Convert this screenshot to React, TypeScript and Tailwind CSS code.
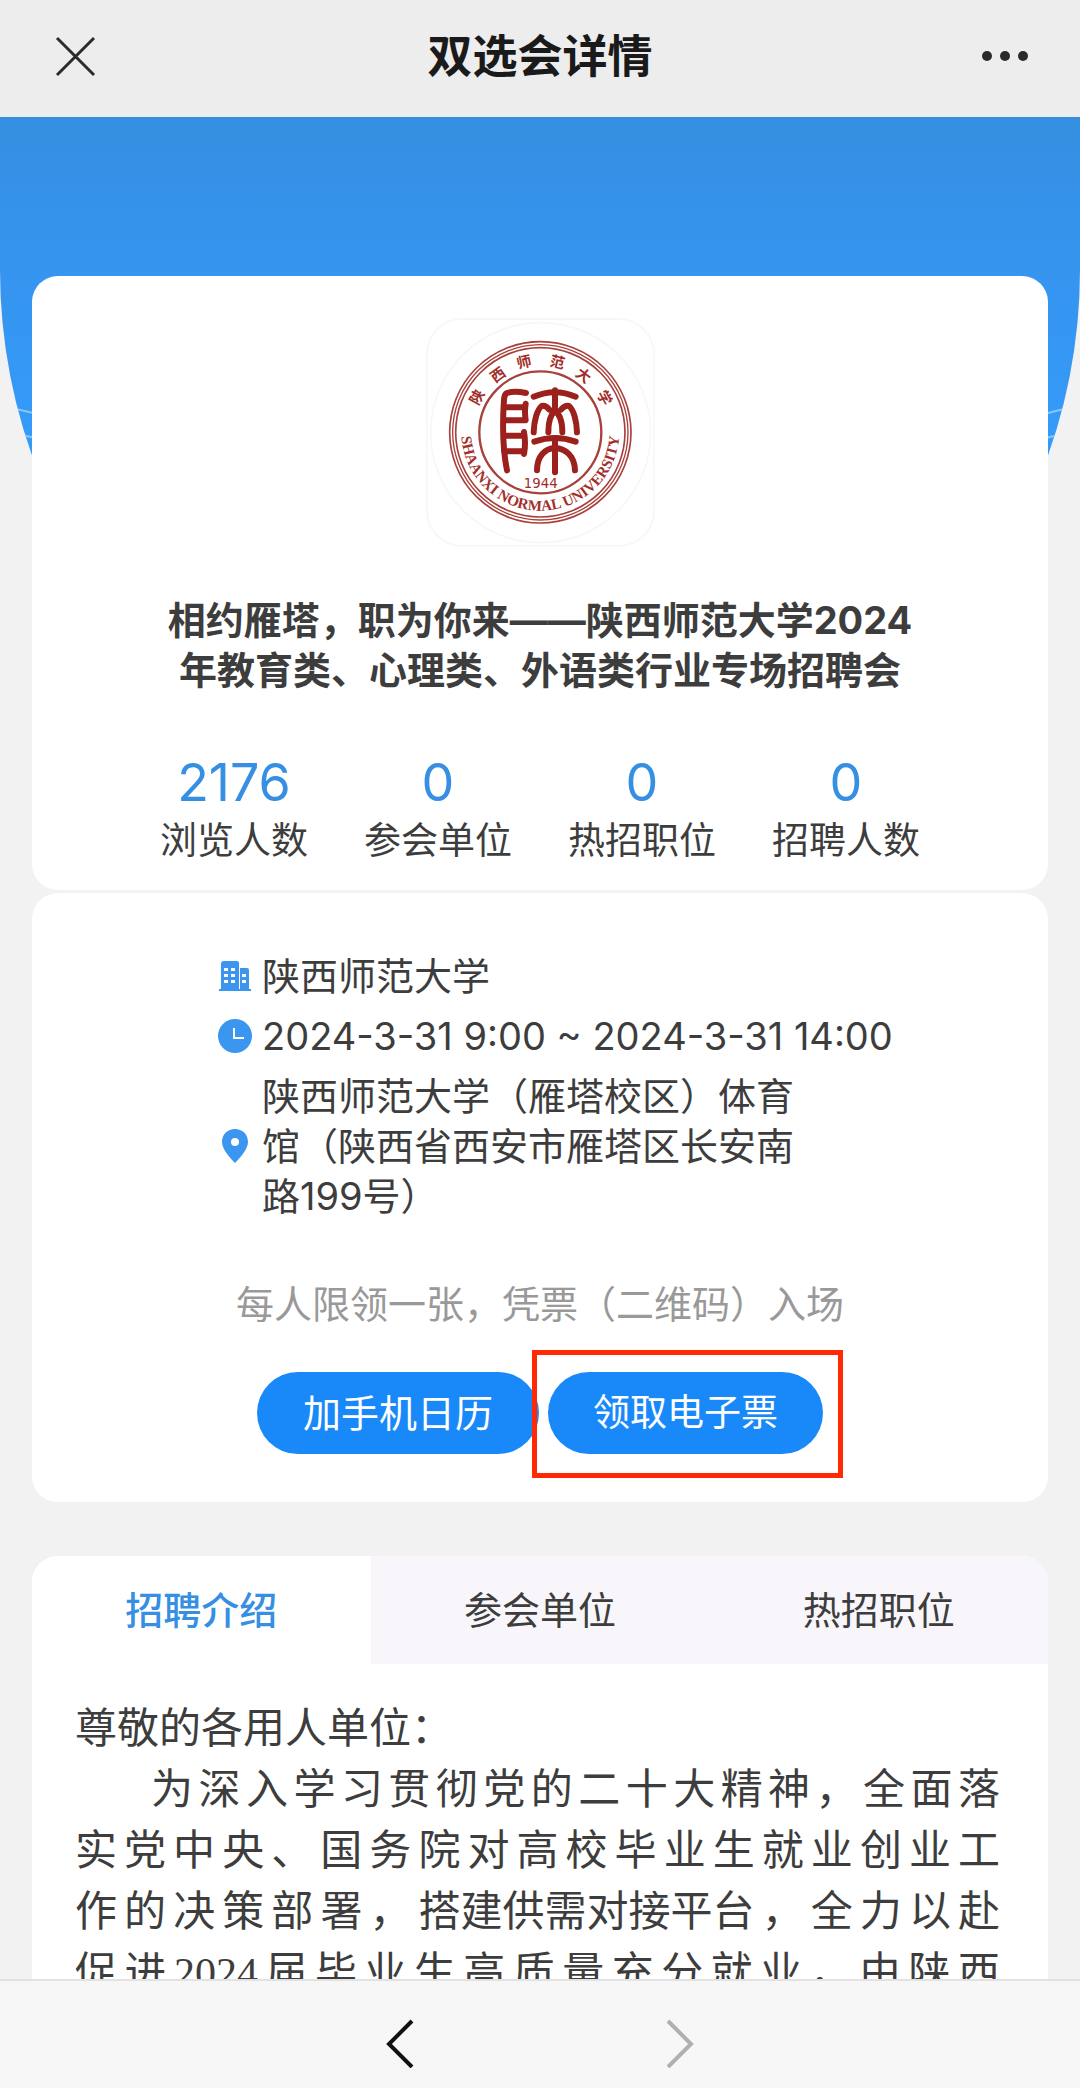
import React, { useState } from 'react';

const stats = [
  { label: '浏览人数', value: 2176 },
  { label: '参会单位', value: 0 },
  { label: '热招职位', value: 0 },
  { label: '招聘人数', value: 0 },
];

const tabs = ['招聘介绍', '参会单位', '热招职位'];

const sealChars = [
  { char: '陕', x: 168, y: 262, rotate: -61 },
  { char: '西', x: 230, y: 195, rotate: -36 },
  { char: '师', x: 309, y: 157, rotate: -13 },
  { char: '范', x: 409, y: 157, rotate: 14 },
  { char: '大', x: 488, y: 197, rotate: 38 },
  { char: '学', x: 551, y: 264, rotate: 62 },
];

const SchoolSeal = () => (
  <svg viewBox="21 31 675 675" className="size-full" role="img" aria-label="陕西师范大学校徽">
    <circle cx="359" cy="369" r="330" fill="none" stroke="#f7f7f7" strokeWidth="5" />
    <g fill="none" stroke="#a8403b">
      <circle cx="358" cy="368" r="272" strokeWidth="5" />
      <circle cx="358" cy="368" r="263" strokeWidth="4" />
      <circle cx="358" cy="368" r="254" strokeWidth="5" />
      <circle cx="358" cy="368" r="183" strokeWidth="7" />
    </g>
    {/* Seal script mark */}
    <g fill="none" stroke="#9c211c" strokeWidth="18" strokeLinecap="round" strokeLinejoin="round">
      <path d="M315 250 C295 246 270 246 258 250 Q250 254 249 270 C245 330 245 420 258 482" />
      <path d="M250 293 H312 M250 332 H312 M314 282 Q310 306 314 332" />
      <path d="M250 378 H308 M250 425 H310 M309 367 Q315 400 309 433" />
      <path d="M338 261 Q402 234 464 261" />
      <path d="M402 242 V308" />
      <path d="M338 368 C339 335 348 300 362 289 Q374 286 385 300" />
      <path d="M382 368 C382 335 388 315 402 304" />
      <path d="M424 368 C424 335 418 315 402 304" />
      <path d="M468 368 C467 335 458 300 444 289 Q432 286 420 300" />
      <path d="M340 396 Q402 374 464 396" />
      <path d="M402 386 V488" />
      <path d="M348 482 C348 440 372 416 402 415 C434 416 461 440 462 482" />
    </g>
    <g fill="#a12e29">
      {sealChars.map(({ char, x, y, rotate }) => (
        <text
          key={char}
          transform={`translate(${x} ${y}) rotate(${rotate})`}
          y="16"
          textAnchor="middle"
          fontSize="44"
          fontWeight="700"
          fontFamily="'Noto Sans CJK SC', sans-serif"
        >
          {char}
        </text>
      ))}
      <text x="359" y="535" textAnchor="middle" fontSize="40" fontFamily="'DejaVu Sans', sans-serif">
        1944
      </text>
      <path id="seal-arc" d="M121 366 A237 237 0 0 0 595 366" fill="none" />
      <text fontSize="45" fontWeight="700" fontFamily="'Liberation Serif', serif" textAnchor="middle">
        <textPath href="#seal-arc" startOffset="50%">
          SHAANXI NORMAL UNIVERSITY
        </textPath>
      </text>
    </g>
  </svg>
);

const BuildingIcon = () => (
  <svg viewBox="0 0 34 34" className="size-[34px]" aria-hidden="true">
    <path
      fill="#3a96ee"
      fillRule="evenodd"
      d="M6 2 H19 Q21 2 21 4 V30 H22 V9 H29 Q31 9 31 11 V30 H33 V32 H1 V30 H3 V5 Q3 2 6 2 Z M6 9 V12 H10 V9 Z M13 9 V12 H17 V9 Z M6 15 V18 H10 V15 Z M13 15 V18 H17 V15 Z M6 21 V24 H10 V21 Z M13 21 V24 H17 V21 Z M24 15 V18 H28 V15 Z M24 21 V24 H28 V21 Z"
    />
  </svg>
);

const ClockIcon = () => (
  <svg viewBox="0 0 34 34" className="size-[34px]" aria-hidden="true">
    <circle cx="17" cy="17" r="17" fill="#3a96ee" />
    <path d="M16 9 V19 H26" fill="none" stroke="#fff" strokeWidth="2" />
  </svg>
);

const PinIcon = () => (
  <svg viewBox="0 0 34 34" className="size-[34px]" aria-hidden="true">
    <path
      fill="#3a96ee"
      fillRule="evenodd"
      d="M17 0 C24 0 30 5 30 13 C30 20 22 29 17 34 C12 29 4 20 4 13 C4 5 10 0 17 0 Z M17 9 A4 4 0 1 0 17 17 A4 4 0 1 0 17 9 Z"
    />
  </svg>
);

const InfoRow: React.FC<{ icon: React.ReactNode; children: React.ReactNode }> = ({ icon, children }) => (
  <li className="flex items-center gap-2.5">
    <span className="shrink-0">{icon}</span>
    <div>{children}</div>
  </li>
);

const App = () => {
  const [activeTab, setActiveTab] = useState(tabs[0]);

  return (
    <div className="flex h-screen flex-col bg-[#f2f2f2] font-['Inter','Noto_Sans_CJK_SC',sans-serif] text-[38px] leading-[50px] text-[#3d3d3d]">
      <header className="flex h-[117px] shrink-0 items-center justify-between bg-[#ededed] px-[50px] pb-1">
        <button type="button" aria-label="关闭" className="size-[50px]">
          <svg viewBox="0 0 50 50" className="size-full" fill="none" stroke="#2b2b2b" strokeWidth="3">
            <path d="M7 6 L44 43 M44 6 L7 43" />
          </svg>
        </button>
        <h1 className="text-[45px] font-bold text-[#1a1a1a]">双选会详情</h1>
        <button type="button" aria-label="更多" className="size-[50px]">
          <svg viewBox="0 0 50 50" className="size-full" fill="#2b2b2b">
            <circle cx="7" cy="24" r="5" />
            <circle cx="25" cy="24" r="5" />
            <circle cx="43" cy="24" r="5" />
          </svg>
        </button>
      </header>

      <main className="relative flex-1 overflow-y-auto [scrollbar-width:none]">
        {/* Curved banner behind the cards */}
        <div className="absolute inset-x-0 top-0 h-[700px] overflow-hidden bg-linear-to-b from-[#358fe0] via-[#3593ec] via-15% to-[#359bfb] to-50% [border-radius:0_0_50%_50%/0_0_547px_547px]">
          <svg viewBox="0 0 1080 700" preserveAspectRatio="none" className="size-full" fill="none" stroke="#8cc6fb" strokeWidth="2">
            <path d="M0 288 Q540 428 1080 288" />
            <path d="M0 313 Q540 443 1080 313" />
          </svg>
        </div>

        <div className="relative px-8 pt-[159px]">
          <section className="rounded-[26px] bg-white px-[100px] pt-[42px] pb-6">
            <div className="mx-auto size-[229px] overflow-hidden rounded-[36px] border-2 border-[#f8f8f8]">
              <SchoolSeal />
            </div>
            <h2 className="mx-auto mt-12 max-w-[770px] text-center font-bold">
              相约雁塔，职为你来——陕西师范大学2024年教育类、心理类、外语类行业专场招聘会
            </h2>
            <dl className="mt-[63px] grid grid-cols-4 text-center">
              {stats.map((item) => (
                <div key={item.label} className="flex flex-col-reverse gap-2">
                  <dt className="text-[37px]">{item.label}</dt>
                  <dd className="text-[52px] text-[#368fe2]">{item.value}</dd>
                </div>
              ))}
            </dl>
          </section>

          <section className="mt-[3px] rounded-[26px] bg-white pt-[58px] pb-12">
            <ul className="flex flex-col gap-2.5 pl-[186px]">
              <InfoRow icon={<BuildingIcon />}>陕西师范大学</InfoRow>
              <InfoRow icon={<ClockIcon />}>2024-3-31 9:00 ~ 2024-3-31 14:00</InfoRow>
              <InfoRow icon={<PinIcon />}>
                <p className="max-w-[550px]">陕西师范大学（雁塔校区）体育馆（陕西省西安市雁塔区长安南路199号）</p>
              </InfoRow>
            </ul>
            <p className="mt-[58px] text-center text-[#999999]">每人限领一张，凭票（二维码）入场</p>
            <div className="mt-[43px] flex justify-center gap-[9px] text-white">
              <button type="button" className="h-[82px] rounded-full bg-[#1989fa] px-[46px]">
                加手机日历
              </button>
              <div className="relative">
                <button type="button" className="h-[82px] rounded-full bg-[#1989fa] px-[45px] text-[37px]">
                  领取电子票
                </button>
                <span className="pointer-events-none absolute -top-[22px] -right-5 -bottom-6 -left-4 border-[5px] border-[#ff2a05]" />
              </div>
            </div>
          </section>

          <section className="mt-[54px] overflow-hidden rounded-t-[26px] bg-white">
            <div role="tablist" className="grid h-[108px] grid-cols-3">
              {tabs.map((tab) => (
                <button
                  key={tab}
                  type="button"
                  role="tab"
                  aria-selected={tab === activeTab}
                  onClick={() => setActiveTab(tab)}
                  className={tab === activeTab ? 'bg-white font-medium text-[#368fe2]' : 'bg-[#f8f6fa]'}
                >
                  {tab}
                </button>
              ))}
            </div>
            <article className="pt-[35px] pr-12 pb-10 pl-[43px] font-['Liberation_Serif','Noto_Sans_CJK_SC',serif] text-[42px] leading-[61px] [&>p]:whitespace-nowrap">
              <p>尊敬的各用人单位：</p>
              <p className="pl-[76px] [text-align-last:justify]">为深入学习贯彻党的二十大精神，全面落</p>
              <p className="[text-align-last:justify]">实党中央、国务院对高校毕业生就业创业工</p>
              <p className="[text-align-last:justify]">
                作的决策部署，<span className="inline-block">搭建供需对接平台</span>，全力以赴
              </p>
              <p className="[text-align-last:justify]">促进2024届毕业生高质量充分就业，由陕西</p>
            </article>
          </section>
        </div>
      </main>

      <nav className="flex h-[109px] shrink-0 items-center justify-center gap-[230px] border-t-2 border-[#e2e2e2] bg-[#f7f7f7] pt-4">
        <button type="button" aria-label="后退" className="size-[50px]">
          <svg viewBox="0 0 50 50" className="size-full" fill="none" stroke="#111" strokeWidth="4">
            <path d="M37 3 L14 26 L37 49" />
          </svg>
        </button>
        <button type="button" aria-label="前进" className="size-[50px]">
          <svg viewBox="0 0 50 50" className="size-full" fill="none" stroke="#b0b0b0" strokeWidth="4">
            <path d="M13 3 L36 26 L13 49" />
          </svg>
        </button>
      </nav>
    </div>
  );
};

export default App;
